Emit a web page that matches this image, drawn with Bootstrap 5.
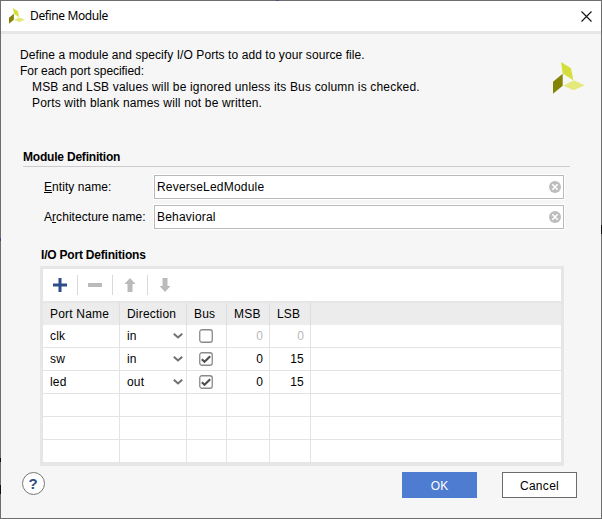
<!DOCTYPE html>
<html lang="en">
<head>
<meta charset="utf-8">
<meta name="viewport" content="width=device-width, initial-scale=1">
<title>Define Module</title>
<link href="https://cdn.jsdelivr.net/npm/bootstrap@5.3.0/dist/css/bootstrap.min.css" rel="stylesheet">
<style>
body{font:12px/16px "Liberation Sans",Arial,sans-serif;color:#000;letter-spacing:.2px;overflow:hidden}
.dialog{width:602px;height:519px;padding:1px;background:
 linear-gradient(#3a4f86,#3a4f86) 276px 0/3px 1px no-repeat,
 linear-gradient(#2f4a86,#2f4a86) 0 238px/1px 3px no-repeat,
 linear-gradient(#111,#111) 0 458px/1px 4px no-repeat,
 linear-gradient(#111,#111) 0 485px/1px 9px no-repeat,
 linear-gradient(#111,#111) 601px 225px/1px 9px no-repeat,
 #6e6e70}
.titlebar{height:33px;border-bottom:3px solid #e6e6e6;padding:0 9px 0 8px;letter-spacing:0}
.titlebar .caption{font:12px/16px "Noto Sans","Open Sans",sans-serif;margin:0 0 0 5px;letter-spacing:-.38px}
.content{background:#f6f6f6;padding:13px 31px 0 19px}
.intro{height:101px;letter-spacing:.07px}
.intro .short{letter-spacing:-.06px}
.intro .sub{padding-left:12px;letter-spacing:.17px}
.brand{margin:15px -15px 0 0}
.section{font-weight:700;letter-spacing:-.2px}
.rule{border-bottom:1px solid #ccc;margin-left:3px;height:19px;padding-top:1px}
.port-title{margin:18px 0 3px 21px}
.fields{gap:6px}
.line{height:24px}
.line label{width:110px;letter-spacing:.05px;white-space:nowrap}
.field{width:410px;border:1px solid #b9b9b9;box-shadow:0 0 0 1px #fff;padding:0 2px}
.ports{width:524px;height:200px;margin-left:20px;border:3px solid #e6e6e6;border-bottom-width:4px}
.tools{height:34px;border-bottom:2px solid #e6e6e6;padding-left:9px;gap:9px}
.tools i{width:1px;height:20px;background:#d9d9d9}
.grid{table-layout:fixed;width:518px;border-collapse:separate;border-spacing:0}
.grid td,.grid th{padding:0 6px 0 7px;height:23px;border-right:1px solid #e3e3e3;border-bottom:1px solid #e3e3e3;font-weight:400;line-height:15px;vertical-align:middle}
.grid th{height:22px;background:#ececec;border-right-color:#dedede;border-bottom:0;white-space:nowrap}
.grid tr>:last-child{border-right:0}
.grid tr:last-child td{border-bottom:0;height:23px}
.grid td.pick{padding-right:3px}
.grid td.check{padding:0 7px 0 6px}
.grid .off{color:#b8b8b8}
.grid svg{display:block}
.footer-row{padding-top:6px;height:51px}
.help{width:23px;height:23px;border:1px solid #777;font-size:15px;color:#2d4d8b;letter-spacing:0;margin-left:1.5px}
.cmd{width:75px;height:26px;border:1px solid #6b6b6b;border-radius:0;font-size:12px;line-height:16px;letter-spacing:.3px;padding:1px 0 0;color:#000;background:#fff}
.cmd.go{background:#4e7cd1;border-color:#4e7cd1;color:#fff;letter-spacing:0}
.cancel{margin:0 -7px 0 25px}
</style>
<script src="https://cdn.jsdelivr.net/npm/bootstrap@5.3.0/dist/js/bootstrap.bundle.min.js"></script>
</head>
<body>
<svg class="d-none">
 <symbol id="logo" viewBox="0 0 32 32"><path fill="#d5df3b" d="M8 0 18 6.3 20.3 18.3 9.7 11.5Z"/><path fill="#838407" d="M0 19.7 9.7 11.7V23.7L0 31.7Z"/><path fill="#e3e97c" d="M10.3 23.7 20.7 18.3 31.7 23.3 20.7 28.3Z"/></symbol>
 <symbol id="clear" viewBox="0 0 12 12"><circle cx="6" cy="6" r="6" fill="#bdbdbd"/><path d="M3.3 3.3 8.7 8.7M8.7 3.3 3.3 8.7" stroke="#fff" stroke-width="1.6"/></symbol>
 <symbol id="chev" viewBox="0 0 10 6"><path d="M.8.8 5 4.5 9.2.8" fill="none" stroke="#707070" stroke-width="2"/></symbol>
 <symbol id="box" viewBox="0 0 14 14"><rect x=".75" y=".75" width="12.5" height="12.5" rx="2.2" fill="#fff" stroke="#8a8a8a" stroke-width="1.3"/></symbol>
 <symbol id="tick" viewBox="0 0 14 14"><use href="#box"/><path d="M2.8 7.2 5.5 9.7 11.2 4.2" fill="none" stroke="#505050" stroke-width="2.2"/></symbol>
</svg>
<div class="dialog d-flex flex-column">
 <header class="titlebar d-flex align-items-center bg-white">
  <svg width="16" height="16"><use href="#logo"/></svg>
  <span class="caption">Define Module</span>
  <svg class="ms-auto" width="11" height="11" viewBox="0 0 11 11"><path d="M.5.5l10 10m0-10-10 10" stroke="#111" stroke-width="1.1"/></svg>
 </header>
 <main class="content flex-fill">
  <div class="intro d-flex justify-content-between">
   <div class="text-nowrap">
    <div>Define a module and specify I/O Ports to add to your source file.</div>
    <div class="short">For each port specified:</div>
    <div class="sub">MSB and LSB values will be ignored unless its Bus column is checked.</div>
    <div class="sub">Ports with blank names will not be written.</div>
   </div>
   <svg class="brand" width="32" height="32"><use href="#logo"/></svg>
  </div>
  <div class="section rule">Module Definition</div>
  <div class="fields d-flex flex-column pt-2 ps-4">
   <div class="line d-flex align-items-center"><label><u>E</u>ntity name:</label><div class="field h-100 bg-white d-flex align-items-center justify-content-between"><span>ReverseLedModule</span><svg width="12" height="12"><use href="#clear"/></svg></div></div>
   <div class="line d-flex align-items-center"><label>A<u>r</u>chitecture name:</label><div class="field h-100 bg-white d-flex align-items-center justify-content-between"><span>Behavioral</span><svg width="12" height="12"><use href="#clear"/></svg></div></div>
  </div>
  <div class="section port-title">I/O Port Definitions</div>
  <div class="ports bg-white">
   <div class="tools d-flex align-items-center">
    <svg width="16" height="16" viewBox="0 0 16 16"><path d="M1 8h14M8 1v14" stroke="#2d4d8b" stroke-width="3"/></svg><i></i>
    <svg width="16" height="16" viewBox="0 0 16 16"><path d="M1 8h14" stroke="#bababa" stroke-width="4"/></svg><i></i>
    <svg width="16" height="16" viewBox="0 0 16 16"><path d="M8 1 13.5 7H10.5V15h-5V7H2.5Z" fill="#bababa"/></svg><i></i>
    <svg width="16" height="16" viewBox="0 0 16 16"><path d="M8 15 13.5 9H10.5V1h-5V9H2.5Z" fill="#bababa"/></svg>
   </div>
   <table class="grid">
    <colgroup><col style="width:77px"><col style="width:67px"><col style="width:40px"><col style="width:43px"><col style="width:41px"><col></colgroup>
    <thead><tr><th>Port Name</th><th>Direction</th><th>Bus</th><th>MSB</th><th>LSB</th><th></th></tr></thead>
    <tbody>
     <tr><td>clk</td><td class="pick"><div class="d-flex justify-content-between align-items-center">in<svg width="10" height="6"><use href="#chev"/></svg></div></td><td class="check"><svg class="mx-auto" width="14" height="14"><use href="#box"/></svg></td><td class="text-end off">0</td><td class="text-end off">0</td><td></td></tr>
     <tr><td>sw</td><td class="pick"><div class="d-flex justify-content-between align-items-center">in<svg width="10" height="6"><use href="#chev"/></svg></div></td><td class="check"><svg class="mx-auto" width="14" height="14"><use href="#tick"/></svg></td><td class="text-end">0</td><td class="text-end">15</td><td></td></tr>
     <tr><td>led</td><td class="pick"><div class="d-flex justify-content-between align-items-center">out<svg width="10" height="6"><use href="#chev"/></svg></div></td><td class="check"><svg class="mx-auto" width="14" height="14"><use href="#tick"/></svg></td><td class="text-end">0</td><td class="text-end">15</td><td></td></tr>
     <tr><td></td><td></td><td></td><td></td><td></td><td></td></tr>
     <tr><td></td><td></td><td></td><td></td><td></td><td></td></tr>
     <tr><td></td><td></td><td></td><td></td><td></td><td></td></tr>
    </tbody>
   </table>
  </div>
  <div class="footer-row d-flex align-items-start">
   <button class="help rounded-circle bg-white p-0 fw-bold d-flex align-items-center justify-content-center" aria-label="Help">?</button>
   <button class="btn cmd go ms-auto">OK</button>
   <button class="btn cmd cancel">Cancel</button>
  </div>
 </main>
</div>
</body>
</html>
